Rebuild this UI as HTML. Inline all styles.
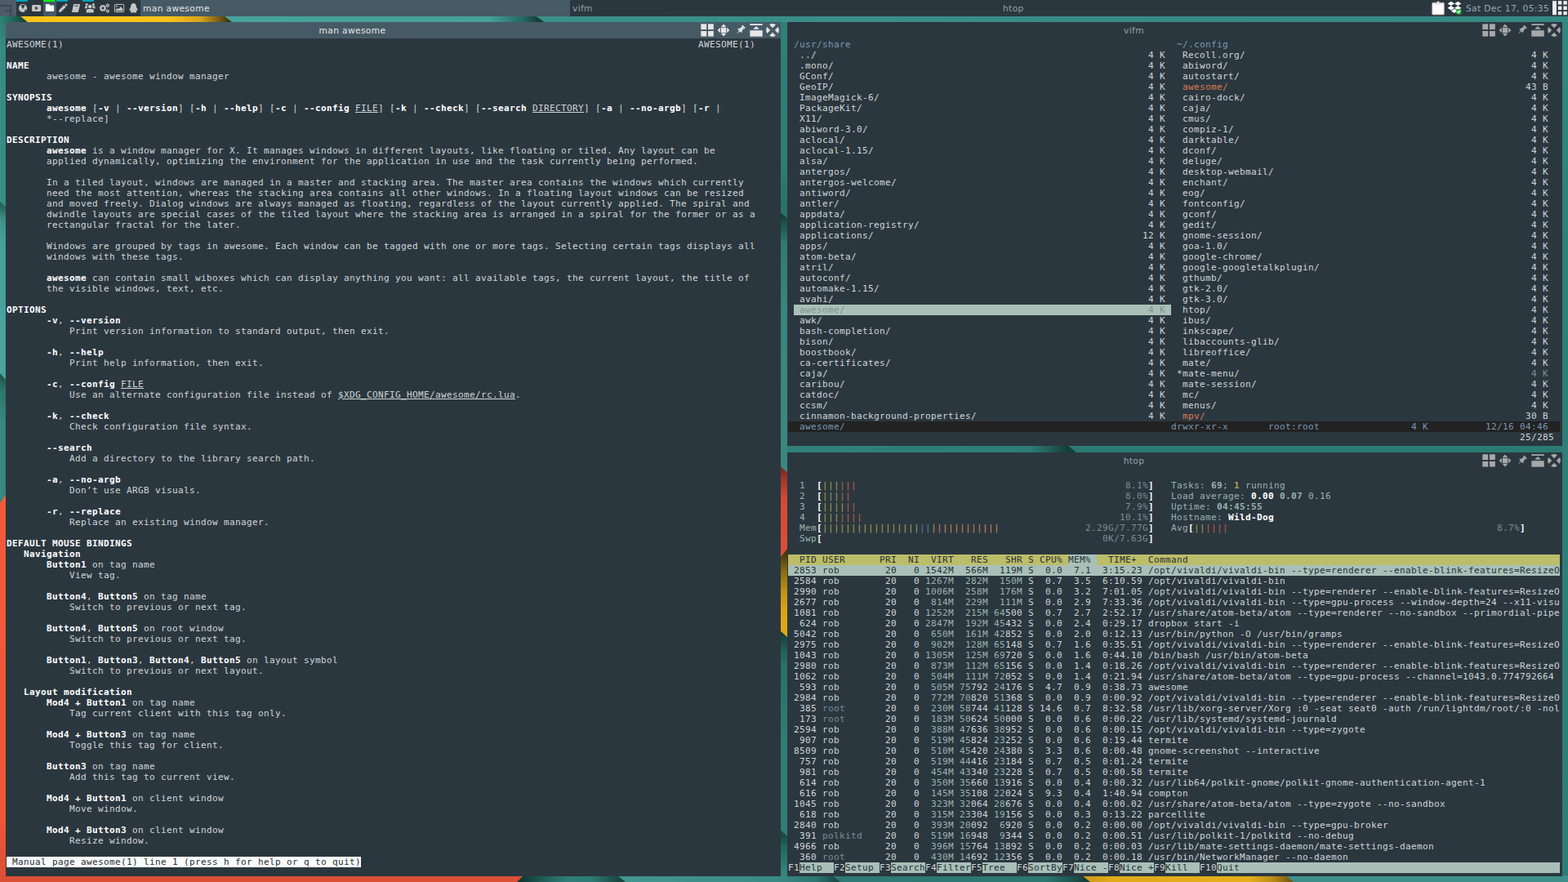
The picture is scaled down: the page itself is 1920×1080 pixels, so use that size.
<!DOCTYPE html>
<html lang="en"><head><meta charset="utf-8"><title>awesome desktop</title>
<style>
html,body{margin:0;padding:0}
body{width:1920px;height:1080px;overflow:hidden;position:relative;background:#38887f;font-family:"DejaVu Sans","Liberation Sans",sans-serif}
#wall{position:absolute;left:0;top:0}
#bar{position:absolute;left:0;top:0;width:1920px;height:20px;background:#2b373f;font-size:10.67px;letter-spacing:.36px;line-height:21px;color:#93a1a8;white-space:nowrap}
#bar div,#bar svg{position:absolute;top:0}
.win{position:absolute;background:#2b373f;overflow:hidden}
.tbar{position:absolute;left:0;top:0;right:0;height:20px;font-size:10.67px;letter-spacing:.36px;line-height:21px;white-space:nowrap}
.ttl{position:absolute;left:0;right:100px;top:0;text-align:center}
.tbi{position:absolute;top:0}
.term{position:absolute;left:1px;top:21px;right:0;bottom:0;font-family:"DejaVu Sans Mono","Liberation Mono",monospace;font-size:11px;letter-spacing:0.3774px;line-height:13px;white-space:pre;color:#d0d6d8}
.r{position:absolute;left:0;height:13px;width:945px}
.r span{position:absolute;top:0}
.r i{position:absolute;top:0;height:13px}
.b{font-weight:bold;color:#ffffff}
.u{text-decoration:underline;text-underline-offset:1px;text-decoration-thickness:1px}
.k{color:#263036}
.inv{background:#fafafa}
.bl{color:#7a99b5}
.or{color:#de7c54}
.sel{background:#a9c0b8}
.sf{color:#82918f}
.stat{background:#222222}
.hdr{background:#bcbd68}
.cy{color:#9bb3ae}
.cyb{color:#9bb3ae;font-weight:bold}
.g{color:#a8a548}
.gb{color:#a8a548;font-weight:bold}
.rd{color:#c5604c}
.y{color:#d88a55}
.bb{color:#5f7ea6}
.sh{color:#7d8b93}
</style></head><body>
<svg id="wall" width="1920" height="1080" viewBox="0 0 1920 1080"><defs><linearGradient id="w1" gradientUnits="userSpaceOnUse" y1="20" y2="1080" x1="0" x2="0"><stop offset="0.000" stop-color="#318880"/><stop offset="0.264" stop-color="#2e7f78"/><stop offset="1.000" stop-color="#2d7d76"/></linearGradient><linearGradient id="w2" gradientUnits="userSpaceOnUse" x1="650" x2="1920" y1="0" y2="0"><stop offset="0.000" stop-color="#3a9089"/><stop offset="0.512" stop-color="#388c85"/><stop offset="1.000" stop-color="#358881"/></linearGradient><linearGradient id="w3" gradientUnits="userSpaceOnUse" x1="283" x2="660" y1="0" y2="0"><stop offset="0.000" stop-color="#48a39d"/><stop offset="0.841" stop-color="#45a09a"/><stop offset="0.947" stop-color="#246862"/><stop offset="1.000" stop-color="#143c38"/></linearGradient><linearGradient id="w4" gradientUnits="userSpaceOnUse" x1="0" x2="30" y1="0" y2="0"><stop offset="0.000" stop-color="#2d867c"/><stop offset="0.467" stop-color="#226a5e"/><stop offset="1.000" stop-color="#15443a"/></linearGradient><linearGradient id="w5" gradientUnits="userSpaceOnUse" x1="26" x2="283" y1="0" y2="0"><stop offset="0.000" stop-color="#fcc419"/><stop offset="0.696" stop-color="#fbc31a"/><stop offset="0.852" stop-color="#d8a51b"/><stop offset="0.942" stop-color="#7a5f14"/><stop offset="1.000" stop-color="#2e2a12"/></linearGradient><linearGradient id="w6" gradientUnits="userSpaceOnUse" y1="27" y2="250" x1="0" x2="0"><stop offset="0.000" stop-color="#2a7b70"/><stop offset="0.148" stop-color="#33897f"/><stop offset="1.000" stop-color="#348c83"/></linearGradient><linearGradient id="w7" gradientUnits="userSpaceOnUse" y1="250" y2="460" x1="0" x2="0"><stop offset="0.000" stop-color="#1d5d56"/><stop offset="0.095" stop-color="#3a9089"/><stop offset="0.238" stop-color="#42a09a"/><stop offset="1.000" stop-color="#46a39c"/></linearGradient><linearGradient id="w8" gradientUnits="userSpaceOnUse" y1="460" y2="610" x1="0" x2="0"><stop offset="0.000" stop-color="#1b5048"/><stop offset="0.133" stop-color="#29756d"/><stop offset="0.400" stop-color="#35877f"/><stop offset="1.000" stop-color="#33867e"/></linearGradient><linearGradient id="w9" gradientUnits="userSpaceOnUse" y1="610" y2="1080" x1="0" x2="0"><stop offset="0.000" stop-color="#f05a3a"/><stop offset="0.830" stop-color="#ee5637"/><stop offset="1.000" stop-color="#dc5034"/></linearGradient><linearGradient id="w10" gradientUnits="userSpaceOnUse" x1="0" x2="8" y1="0" y2="0"><stop offset="0.000" stop-color="rgba(255,255,255,0.04)"/><stop offset="0.500" stop-color="rgba(255,255,255,0)"/><stop offset="1.000" stop-color="rgba(0,0,0,0.12)"/></linearGradient><linearGradient id="w11" gradientUnits="userSpaceOnUse" x1="636" x2="760" y1="0" y2="0"><stop offset="0.000" stop-color="#103430"/><stop offset="0.194" stop-color="#1d5752"/><stop offset="0.476" stop-color="#2f7f78"/><stop offset="0.718" stop-color="#2c7a73"/><stop offset="0.984" stop-color="#184641"/></linearGradient><linearGradient id="w12" gradientUnits="userSpaceOnUse" x1="760" x2="1025" y1="0" y2="0"><stop offset="0.000" stop-color="#41978f"/><stop offset="0.717" stop-color="#3a8a84"/><stop offset="0.906" stop-color="#2c756f"/><stop offset="1.000" stop-color="#184944"/></linearGradient><linearGradient id="w13" gradientUnits="userSpaceOnUse" x1="1025" x2="1330" y1="0" y2="0"><stop offset="0.000" stop-color="#2e7a74"/><stop offset="0.836" stop-color="#2c7770"/><stop offset="0.934" stop-color="#1e5752"/><stop offset="1.000" stop-color="#143e3a"/></linearGradient><linearGradient id="w14" gradientUnits="userSpaceOnUse" x1="1330" x2="1582" y1="0" y2="0"><stop offset="0.000" stop-color="#d09a1a"/><stop offset="0.119" stop-color="#e0aa1a"/><stop offset="0.794" stop-color="#e5ae1a"/><stop offset="0.913" stop-color="#b88a14"/><stop offset="1.000" stop-color="#6e5510"/></linearGradient><linearGradient id="w15" gradientUnits="userSpaceOnUse" y1="27" y2="262" x1="0" x2="0"><stop offset="0.000" stop-color="#2f8079"/><stop offset="0.736" stop-color="#2e7d76"/><stop offset="1.000" stop-color="#2a6f69"/></linearGradient><linearGradient id="w16" gradientUnits="userSpaceOnUse" y1="262" y2="580" x1="0" x2="0"><stop offset="0.000" stop-color="#133a35"/><stop offset="0.041" stop-color="#1d544e"/><stop offset="0.113" stop-color="#2f7a73"/><stop offset="0.371" stop-color="#3a8580"/><stop offset="1.000" stop-color="#3c8782"/></linearGradient><linearGradient id="w17" gradientUnits="userSpaceOnUse" y1="573" y2="680" x1="0" x2="0"><stop offset="0.000" stop-color="#74281e"/><stop offset="0.159" stop-color="#a83a2a"/><stop offset="0.364" stop-color="#d44a35"/><stop offset="1.000" stop-color="#dc4f38"/></linearGradient><linearGradient id="w18" gradientUnits="userSpaceOnUse" y1="676" y2="776" x1="0" x2="0"><stop offset="0.000" stop-color="#40330f"/><stop offset="0.240" stop-color="#8a6c10"/><stop offset="0.490" stop-color="#c09312"/><stop offset="0.740" stop-color="#d9a514"/><stop offset="1.000" stop-color="#dca815"/></linearGradient><linearGradient id="w19" gradientUnits="userSpaceOnUse" y1="776" y2="1020" x1="0" x2="0"><stop offset="0.000" stop-color="#153d38"/><stop offset="0.078" stop-color="#215e59"/><stop offset="0.160" stop-color="#2a6f6a"/><stop offset="0.508" stop-color="#2e7d76"/><stop offset="1.000" stop-color="#2e7d76"/></linearGradient><linearGradient id="w20" gradientUnits="userSpaceOnUse" y1="1020" y2="1072" x1="0" x2="0"><stop offset="0.000" stop-color="#164440"/><stop offset="0.385" stop-color="#256a64"/><stop offset="0.808" stop-color="#2f7f78"/><stop offset="1.000" stop-color="#368680"/></linearGradient><linearGradient id="w21" gradientUnits="userSpaceOnUse" x1="964" x2="1308" y1="0" y2="0"><stop offset="0.000" stop-color="#327f79"/><stop offset="0.860" stop-color="#2e7d77"/><stop offset="0.933" stop-color="#235f5a"/><stop offset="1.000" stop-color="#153c38"/></linearGradient></defs><rect x="0" y="0" width="1920" height="1080" fill="#2d7d76"/><rect x="1912" y="20" width="8" height="1060" fill="url(#w1)"/><rect x="650" y="19" width="1270" height="9" fill="url(#w2)"/><rect x="268" y="19" width="405" height="9" fill="url(#w3)"/><polygon points="655,19 680,19 680,28 668,28" fill="#3a9089"/><rect x="0" y="19" width="40" height="9" fill="url(#w4)"/><polygon points="24,19 274,19 285,28 35,28" fill="url(#w5)"/><rect x="0" y="27" width="8" height="230" fill="url(#w6)"/><polygon points="0,247 8,254 8,470 0,470" fill="url(#w7)"/><polygon points="0,457 8,466 8,620 0,620" fill="url(#w8)"/><polygon points="0,616 8,604 8,1080 0,1080" fill="url(#w9)"/><rect x="0" y="27" width="8" height="585" fill="url(#w10)"/><rect x="0" y="1072" width="640" height="8" fill="#db5034"/><polygon points="641,1072 760,1072 768,1080 633,1080" fill="url(#w11)"/><polygon points="756,1072 1021,1072 1031,1080 766,1080" fill="url(#w12)"/><polygon points="1019,1072 1327,1072 1337,1080 1029,1080" fill="url(#w13)"/><polygon points="1325,1072 1576,1072 1586,1080 1335,1080" fill="url(#w14)"/><polygon points="1574,1072 1920,1072 1920,1080 1584,1080" fill="#3f8f89"/><rect x="955" y="27" width="10" height="245" fill="url(#w15)"/><polygon points="955,260 965,268 965,580 955,580" fill="url(#w16)"/><polygon points="955,571 965,579 965,685 955,685" fill="url(#w17)"/><polygon points="955,683 965,671 965,785 955,785" fill="url(#w18)"/><polygon points="955,772 965,781 965,1030 955,1030" fill="url(#w19)"/><polygon points="955,1016 965,1025 965,1073 955,1073" fill="url(#w20)"/><rect x="964" y="545" width="358" height="10" fill="url(#w21)"/><polygon points="1307,545 1913,545 1913,555 1319,555" fill="#2c7a73"/></svg>
<div id="bar"><svg style="left:0" width="20" height="20" viewBox="0 0 20 20"><rect width="20" height="20" fill="#4f5b67"/><path d="M0 7h13.300v13M6 13.200h7.300" fill="none" stroke="#3c4752" stroke-width="2"/></svg><div style="left:53px;width:16px;height:20px;background:#465a65"></div><div style="left:20px;width:14px;height:2px;background:#00a3b4"></div><div style="left:53px;width:14px;height:2px;background:#00ff00"></div><div style="left:69px;width:14px;height:2px;background:#00a3b4"></div><div style="left:101px;width:14px;height:2px;background:#00a3b4"></div><svg style="left:20px" width="16" height="20" viewBox="0 0 16 20"><circle cx="8" cy="10" r="5.1" fill="#c4c4c4"/><path d="M6 6.2l3.4-.4 1.2 1.5-1.6 1.8-.4 1.6-1.3-.6-.9-1.9zM10.6 11.6l1.6.3-.6 1.8-1.3.4z" fill="#2b373f"/></svg><svg style="left:37px" width="16" height="20" viewBox="0 0 16 20"><rect x="2" y="5.9" width="11.2" height="8.1" rx="1.6" fill="#c4c4c4"/><path d="M6.2 7.8v4.4l3.6-2.2z" fill="#2b373f"/></svg><svg style="left:53px" width="16" height="20" viewBox="0 0 16 20"><path d="M2.8 5.8q0-.9.9-.9h3.2q.9 0 .9.9v.8h4.5q.9 0 .9.9V13q0 .9-.9.9H3.700q-.9 0-.9-.9z" fill="#ffffff"/></svg><svg style="left:69px" width="16" height="20" viewBox="0 0 16 20"><path d="M2.800 15.100l.7-3 6-6 2.300 2.300-6 6zM10.200 5.400l.9-.9q.5-.5 1 0l1.300 1.300q.5.5 0 1l-.9.900z" fill="#c4c4c4"/></svg><svg style="left:85px" width="16" height="20" viewBox="0 0 16 20"><path d="M5.200 5h7.300q.7 0 .5.700L10.900 14.600q-.2.500-.9.500H3.900q-1 0-.8-1zM6.600 6.800h4.200l-.3 1H6.300z" fill="#c4c4c4" fill-rule="evenodd"/></svg><svg style="left:101px" width="18" height="20" viewBox="0 0 18 20" fill="#c4c4c4"><circle cx="9.200" cy="8" r="2.300"/><path d="M5.400 15.500q-.8 0-.8-.8v-1.600q0-2.200 2.300-2.200h4.600q2.300 0 2.300 2.200v1.600q0 .8-.8.800z"/><circle cx="5.100" cy="5.600" r="1.500"/><circle cx="13.300" cy="5.600" r="1.500"/><path d="M3 7.500h3.300l-.2 1.800-1.800 1.200H3zM15.400 7.500h-3.300l.2 1.800 1.800 1.200h1.300z"/></svg><svg style="left:119px" width="18" height="20" viewBox="0 0 18 20"><circle cx="7" cy="9.900" r="2.500" fill="none" stroke="#c4c4c4" stroke-width="1.900"/><circle cx="7" cy="9.900" r="3.700" fill="none" stroke="#c4c4c4" stroke-width="1.100" stroke-dasharray="1.450 1.456"/><circle cx="12.800" cy="6.700" r="1.300" fill="none" stroke="#c4c4c4" stroke-width="1.100"/><circle cx="12.800" cy="13.500" r="1.300" fill="none" stroke="#c4c4c4" stroke-width="1.100"/><circle cx="12.800" cy="6.700" r="2" fill="none" stroke="#c4c4c4" stroke-width=".8" stroke-dasharray=".9 1.194"/><circle cx="12.800" cy="13.500" r="2" fill="none" stroke="#c4c4c4" stroke-width=".8" stroke-dasharray=".9 1.194"/></svg><svg style="left:137px" width="18" height="20" viewBox="0 0 18 20"><rect x="3.300" y="5.400" width="11.400" height="9.200" rx=".8" fill="none" stroke="#c4c4c4" stroke-width="1"/><circle cx="6" cy="7.800" r="1" fill="#c4c4c4"/><path d="M4.700 13.300v-1.500l2-1.800 1.300 1.200 2.800-3.300 2.600 3.200v2.200z" fill="#c4c4c4"/></svg><svg style="left:155px" width="17" height="20" viewBox="0 0 17 20"><path d="M8.500 4q3.100 0 3.300 3.600.100 1.300 1.200 2.900.9 1.500.4 2.400-.4.300-.9-.5-.3 1-1 1.500.9.400.8 1-.2.700-2 .7-1.300 0-1.800-.5-.5.500-1.800.5-1.800 0-2-.7-.1-.6.800-1-.7-.5-1-1.500-.5.800-.9.500-.5-.9.400-2.400 1.100-1.600 1.200-2.900Q5.400 4 8.500 4z" fill="#c4c4c4"/></svg><div style="left:172px;width:526px;height:20px;background:#465a65"></div><div style="left:175px;color:#e4e7e8">man awesome</div><div style="left:701px">vifm</div><div style="left:1228px">htop</div><svg style="left:1752px" width="18" height="20" viewBox="0 0 18 20"><rect x="1.700" y="3.300" width="14.600" height="14.700" rx="1" fill="#fff" stroke="#b79d92" stroke-width=".9"/><path d="M5.200 4.800q0-1.600 1.600-1.600h.7q.2-1.800 1.500-1.800t1.500 1.800h.7q1.600 0 1.600 1.600z" fill="#e8e8e8" stroke="#aaa" stroke-width=".4"/></svg><svg style="left:1771px" width="20" height="20" viewBox="0 0 20 20"><path d="M5.800 1.700 10 4.400 5.800 7.100 1.600 4.400zM14.200 1.700l4.200 2.700-4.200 2.700L10 4.400zM1.600 9.800l4.200-2.700L10 9.800l-4.200 2.700zM14.200 7.100l4.200 2.700-4.200 2.700L10 9.800zM5.800 13.400l4.200-2.700 4.200 2.700-4.200 2.700z" fill="#fff"/><circle cx="15.100" cy="14.200" r="3.500" fill="#2fb344"/><path d="M13.300 14.200l1.300 1.300 2.400-2.500" fill="none" stroke="#fff" stroke-width="1.100"/></svg><div style="left:1795px;color:#93a8bc">Sat Dec 17, 05:35</div><svg style="left:1900px" width="20" height="20" viewBox="0 0 20 20" fill="#ececec"><rect x="1" y="1.100" width="4.900" height="17.200"/><rect x="7.800" y="1.100" width="4.500" height="4.500"/><rect x="14.300" y="1.100" width="4.500" height="4.500"/><rect x="7.800" y="7.500" width="4.500" height="4.700"/><rect x="14.300" y="7.500" width="4.500" height="4.700"/><rect x="7.800" y="14" width="4.500" height="4.300"/><rect x="14.300" y="14" width="4.500" height="4.300"/></svg></div>
<div class="win" style="left:7px;top:27px;width:949px;height:1046px">
<div class="tbar" style="background:#465a65;color:#e4e7e8"><div class="ttl">man awesome</div><svg class="tbi" style="right:80px" width="20" height="20" viewBox="0 0 20 20" fill="#e6e6e6"><rect x="2.3" y="2.3" width="6.9" height="6.8"/><rect x="11" y="2.3" width="6.8" height="6.8"/><rect x="2.3" y="11" width="6.9" height="6.6"/><rect x="11" y="11" width="6.8" height="6.6"/></svg><svg class="tbi" style="right:60px" width="20" height="20" viewBox="0 0 20 20" fill="#e6e6e6"><rect x="6.9" y="6.8" width="6.3" height="6.5"/><path d="M10 2.6 13.2 5.9H6.8zM10 17.4 6.8 14.1h6.4zM2.6 10 5.9 6.8v6.4zM17.4 10 14.1 13.2V6.8z"/></svg><svg class="tbi" style="right:40px" width="20" height="20" viewBox="0 0 20 20" fill="#e6e6e6"><g transform="translate(10.700 9.700) rotate(45)"><rect x="-2.500" y="-6.200" width="5" height="1.900" rx=".6"/><path d="M-1.500-4.500h3l.5 4.200h-4z"/><path d="M-3.200 1.700Q-3.200-.9 0-.9 3.200-.9 3.200 1.700z"/><path d="M-.7 1.600h1.400L0 6.700z"/></g></svg><svg class="tbi" style="right:20px" width="20" height="20" viewBox="0 0 20 20" fill="#e6e6e6"><rect x="2.3" y="2.2" width="15.4" height="1.800"/><path d="M10 5 13.800 8.800H6.200z"/><rect x="2.3" y="10.200" width="15.400" height="7.500"/></svg><svg class="tbi" style="right:0px" width="20" height="20" viewBox="0 0 20 20" fill="#e6e6e6"><path d="M10 7.200 6.100 3.250A7.800 7.800 0 0 1 13.900 3.250zM10 12.800 13.900 16.750A7.800 7.800 0 0 1 6.100 16.750zM7.200 10 3.250 13.900A7.800 7.800 0 0 1 3.250 6.100zM12.800 10 16.750 6.100A7.800 7.800 0 0 1 16.750 13.900z"/></svg></div>
<div class="term"><div class="r" style="top:0px"><span style="left:0px">AWESOME(1)</span><span style="left:847px">AWESOME(1)</span></div><div class="r" style="top:26px"><span class="b" style="left:0px">NAME</span></div><div class="r" style="top:39px"><span style="left:49px">awesome - awesome window manager</span></div><div class="r" style="top:65px"><span class="b" style="left:0px">SYNOPSIS</span></div><div class="r" style="top:78px"><span class="b" style="left:49px">awesome</span><span style="left:105px">[</span><span class="b" style="left:112px">-v</span><span style="left:133px">| </span><span class="b" style="left:147px">--version</span><span style="left:210px">] [</span><span class="b" style="left:231px">-h</span><span style="left:252px">| </span><span class="b" style="left:266px">--help</span><span style="left:308px">] [</span><span class="b" style="left:329px">-c</span><span style="left:350px">| </span><span class="b" style="left:364px">--config</span><span class="u" style="left:427px">FILE</span><span style="left:455px">] [</span><span class="b" style="left:476px">-k</span><span style="left:497px">| </span><span class="b" style="left:511px">--check</span><span style="left:560px">] [</span><span class="b" style="left:581px">--search</span><span class="u" style="left:644px">DIRECTORY</span><span style="left:707px">] [</span><span class="b" style="left:728px">-a</span><span style="left:749px">| </span><span class="b" style="left:763px">--no-argb</span><span style="left:826px">] [</span><span class="b" style="left:847px">-r</span><span style="left:868px">|</span></div><div class="r" style="top:91px"><span style="left:49px">*--replace]</span></div><div class="r" style="top:117px"><span class="b" style="left:0px">DESCRIPTION</span></div><div class="r" style="top:130px"><span class="b" style="left:49px">awesome</span><span style="left:105px">is a window manager for X. It manages windows in different layouts, like floating or tiled. Any layout can be</span></div><div class="r" style="top:143px"><span style="left:49px">applied dynamically, optimizing the environment for the application in use and the task currently being performed.</span></div><div class="r" style="top:169px"><span style="left:49px">In a tiled layout, windows are managed in a master and stacking area. The master area contains the windows which currently</span></div><div class="r" style="top:182px"><span style="left:49px">need the most attention, whereas the stacking area contains all other windows. In a floating layout windows can be resized</span></div><div class="r" style="top:195px"><span style="left:49px">and moved freely. Dialog windows are always managed as floating, regardless of the layout currently applied. The spiral and</span></div><div class="r" style="top:208px"><span style="left:49px">dwindle layouts are special cases of the tiled layout where the stacking area is arranged in a spiral for the former or as a</span></div><div class="r" style="top:221px"><span style="left:49px">rectangular fractal for the later.</span></div><div class="r" style="top:247px"><span style="left:49px">Windows are grouped by tags in awesome. Each window can be tagged with one or more tags. Selecting certain tags displays all</span></div><div class="r" style="top:260px"><span style="left:49px">windows with these tags.</span></div><div class="r" style="top:286px"><span class="b" style="left:49px">awesome</span><span style="left:105px">can contain small wiboxes which can display anything you want: all available tags, the current layout, the title of</span></div><div class="r" style="top:299px"><span style="left:49px">the visible windows, text, etc.</span></div><div class="r" style="top:325px"><span class="b" style="left:0px">OPTIONS</span></div><div class="r" style="top:338px"><span class="b" style="left:49px">-v</span><span style="left:63px">, </span><span class="b" style="left:77px">--version</span></div><div class="r" style="top:351px"><span style="left:77px">Print version information to standard output, then exit.</span></div><div class="r" style="top:377px"><span class="b" style="left:49px">-h</span><span style="left:63px">, </span><span class="b" style="left:77px">--help</span></div><div class="r" style="top:390px"><span style="left:77px">Print help information, then exit.</span></div><div class="r" style="top:416px"><span class="b" style="left:49px">-c</span><span style="left:63px">, </span><span class="b" style="left:77px">--config</span><span class="u" style="left:140px">FILE</span></div><div class="r" style="top:429px"><span style="left:77px">Use an alternate configuration file instead of </span><span class="u" style="left:406px">$XDG_CONFIG_HOME/awesome/rc.lua</span><span style="left:623px">.</span></div><div class="r" style="top:455px"><span class="b" style="left:49px">-k</span><span style="left:63px">, </span><span class="b" style="left:77px">--check</span></div><div class="r" style="top:468px"><span style="left:77px">Check configuration file syntax.</span></div><div class="r" style="top:494px"><span class="b" style="left:49px">--search</span></div><div class="r" style="top:507px"><span style="left:77px">Add a directory to the library search path.</span></div><div class="r" style="top:533px"><span class="b" style="left:49px">-a</span><span style="left:63px">, </span><span class="b" style="left:77px">--no-argb</span></div><div class="r" style="top:546px"><span style="left:77px">Don’t use ARGB visuals.</span></div><div class="r" style="top:572px"><span class="b" style="left:49px">-r</span><span style="left:63px">, </span><span class="b" style="left:77px">--replace</span></div><div class="r" style="top:585px"><span style="left:77px">Replace an existing window manager.</span></div><div class="r" style="top:611px"><span class="b" style="left:0px">DEFAULT MOUSE BINDINGS</span></div><div class="r" style="top:624px"><span class="b" style="left:21px">Navigation</span></div><div class="r" style="top:637px"><span class="b" style="left:49px">Button1</span><span style="left:105px">on tag name</span></div><div class="r" style="top:650px"><span style="left:77px">View tag.</span></div><div class="r" style="top:676px"><span class="b" style="left:49px">Button4</span><span style="left:98px">, </span><span class="b" style="left:112px">Button5</span><span style="left:168px">on tag name</span></div><div class="r" style="top:689px"><span style="left:77px">Switch to previous or next tag.</span></div><div class="r" style="top:715px"><span class="b" style="left:49px">Button4</span><span style="left:98px">, </span><span class="b" style="left:112px">Button5</span><span style="left:168px">on root window</span></div><div class="r" style="top:728px"><span style="left:77px">Switch to previous or next tag.</span></div><div class="r" style="top:754px"><span class="b" style="left:49px">Button1</span><span style="left:98px">, </span><span class="b" style="left:112px">Button3</span><span style="left:161px">, </span><span class="b" style="left:175px">Button4</span><span style="left:224px">, </span><span class="b" style="left:238px">Button5</span><span style="left:294px">on layout symbol</span></div><div class="r" style="top:767px"><span style="left:77px">Switch to previous or next layout.</span></div><div class="r" style="top:793px"><span class="b" style="left:21px">Layout modification</span></div><div class="r" style="top:806px"><span class="b" style="left:49px">Mod4 + Button1</span><span style="left:154px">on tag name</span></div><div class="r" style="top:819px"><span style="left:77px">Tag current client with this tag only.</span></div><div class="r" style="top:845px"><span class="b" style="left:49px">Mod4 + Button3</span><span style="left:154px">on tag name</span></div><div class="r" style="top:858px"><span style="left:77px">Toggle this tag for client.</span></div><div class="r" style="top:884px"><span class="b" style="left:49px">Button3</span><span style="left:105px">on tag name</span></div><div class="r" style="top:897px"><span style="left:77px">Add this tag to current view.</span></div><div class="r" style="top:923px"><span class="b" style="left:49px">Mod4 + Button1</span><span style="left:154px">on client window</span></div><div class="r" style="top:936px"><span style="left:77px">Move window.</span></div><div class="r" style="top:962px"><span class="b" style="left:49px">Mod4 + Button3</span><span style="left:154px">on client window</span></div><div class="r" style="top:975px"><span style="left:77px">Resize window.</span></div><div class="r" style="top:1001px"><i class="inv" style="left:0px;width:434px"></i><span class="k" style="left:0px"> Manual page awesome(1) line 1 (press h for help or q to quit)</span></div></div>
</div>
<div class="win" style="left:964px;top:27px;width:949px;height:519px">
<div class="tbar" style="background:#2b373f;color:#93a1a8"><div class="ttl">vifm</div><svg class="tbi" style="right:80px" width="20" height="20" viewBox="0 0 20 20" fill="#a8a8a8"><rect x="2.3" y="2.3" width="6.9" height="6.8"/><rect x="11" y="2.3" width="6.8" height="6.8"/><rect x="2.3" y="11" width="6.9" height="6.6"/><rect x="11" y="11" width="6.8" height="6.6"/></svg><svg class="tbi" style="right:60px" width="20" height="20" viewBox="0 0 20 20" fill="#a8a8a8"><rect x="6.9" y="6.8" width="6.3" height="6.5"/><path d="M10 2.6 13.2 5.9H6.8zM10 17.4 6.8 14.1h6.4zM2.6 10 5.9 6.8v6.4zM17.4 10 14.1 13.2V6.8z"/></svg><svg class="tbi" style="right:40px" width="20" height="20" viewBox="0 0 20 20" fill="#a8a8a8"><g transform="translate(10.700 9.700) rotate(45)"><rect x="-2.500" y="-6.200" width="5" height="1.900" rx=".6"/><path d="M-1.500-4.500h3l.5 4.200h-4z"/><path d="M-3.200 1.700Q-3.200-.9 0-.9 3.200-.9 3.200 1.700z"/><path d="M-.7 1.600h1.400L0 6.700z"/></g></svg><svg class="tbi" style="right:20px" width="20" height="20" viewBox="0 0 20 20" fill="#a8a8a8"><rect x="2.3" y="2.2" width="15.4" height="1.800"/><path d="M10 5 13.800 8.800H6.200z"/><rect x="2.3" y="10.200" width="15.400" height="7.500"/></svg><svg class="tbi" style="right:0px" width="20" height="20" viewBox="0 0 20 20" fill="#a8a8a8"><path d="M10 7.200 6.100 3.250A7.800 7.800 0 0 1 13.900 3.250zM10 12.800 13.900 16.750A7.800 7.800 0 0 1 6.100 16.750zM7.200 10 3.250 13.900A7.800 7.800 0 0 1 3.250 6.100zM12.800 10 16.750 6.100A7.800 7.800 0 0 1 16.750 13.900z"/></svg></div>
<div class="term"><div class="r" style="top:0px"><span class="bl" style="left:7px">/usr/share</span><span class="bl" style="left:476px">~/.config</span></div><div class="r" style="top:13px"><span style="left:14px">../</span><span style="left:441px">4 K</span></div><div class="r" style="top:26px"><span style="left:14px">.mono/</span><span style="left:441px">4 K</span></div><div class="r" style="top:39px"><span style="left:14px">GConf/</span><span style="left:441px">4 K</span></div><div class="r" style="top:52px"><span style="left:14px">GeoIP/</span><span style="left:441px">4 K</span></div><div class="r" style="top:65px"><span style="left:14px">ImageMagick-6/</span><span style="left:441px">4 K</span></div><div class="r" style="top:78px"><span style="left:14px">PackageKit/</span><span style="left:441px">4 K</span></div><div class="r" style="top:91px"><span style="left:14px">X11/</span><span style="left:441px">4 K</span></div><div class="r" style="top:104px"><span style="left:14px">abiword-3.0/</span><span style="left:441px">4 K</span></div><div class="r" style="top:117px"><span style="left:14px">aclocal/</span><span style="left:441px">4 K</span></div><div class="r" style="top:130px"><span style="left:14px">aclocal-1.15/</span><span style="left:441px">4 K</span></div><div class="r" style="top:143px"><span style="left:14px">alsa/</span><span style="left:441px">4 K</span></div><div class="r" style="top:156px"><span style="left:14px">antergos/</span><span style="left:441px">4 K</span></div><div class="r" style="top:169px"><span style="left:14px">antergos-welcome/</span><span style="left:441px">4 K</span></div><div class="r" style="top:182px"><span style="left:14px">antiword/</span><span style="left:441px">4 K</span></div><div class="r" style="top:195px"><span style="left:14px">antler/</span><span style="left:441px">4 K</span></div><div class="r" style="top:208px"><span style="left:14px">appdata/</span><span style="left:441px">4 K</span></div><div class="r" style="top:221px"><span style="left:14px">application-registry/</span><span style="left:441px">4 K</span></div><div class="r" style="top:234px"><span style="left:14px">applications/</span><span style="left:434px">12 K</span></div><div class="r" style="top:247px"><span style="left:14px">apps/</span><span style="left:441px">4 K</span></div><div class="r" style="top:260px"><span style="left:14px">atom-beta/</span><span style="left:441px">4 K</span></div><div class="r" style="top:273px"><span style="left:14px">atril/</span><span style="left:441px">4 K</span></div><div class="r" style="top:286px"><span style="left:14px">autoconf/</span><span style="left:441px">4 K</span></div><div class="r" style="top:299px"><span style="left:14px">automake-1.15/</span><span style="left:441px">4 K</span></div><div class="r" style="top:312px"><span style="left:14px">avahi/</span><span style="left:441px">4 K</span></div><div class="r" style="top:325px"><i class="sel" style="left:7px;width:462px"></i><span class="sf" style="left:14px">awesome/</span><span class="sf" style="left:441px">4 K</span></div><div class="r" style="top:338px"><span style="left:14px">awk/</span><span style="left:441px">4 K</span></div><div class="r" style="top:351px"><span style="left:14px">bash-completion/</span><span style="left:441px">4 K</span></div><div class="r" style="top:364px"><span style="left:14px">bison/</span><span style="left:441px">4 K</span></div><div class="r" style="top:377px"><span style="left:14px">boostbook/</span><span style="left:441px">4 K</span></div><div class="r" style="top:390px"><span style="left:14px">ca-certificates/</span><span style="left:441px">4 K</span></div><div class="r" style="top:403px"><span style="left:14px">caja/</span><span style="left:441px">4 K</span></div><div class="r" style="top:416px"><span style="left:14px">caribou/</span><span style="left:441px">4 K</span></div><div class="r" style="top:429px"><span style="left:14px">catdoc/</span><span style="left:441px">4 K</span></div><div class="r" style="top:442px"><span style="left:14px">ccsm/</span><span style="left:441px">4 K</span></div><div class="r" style="top:455px"><span style="left:14px">cinnamon-background-properties/</span><span style="left:441px">4 K</span></div><div class="r" style="top:13px"><span style="left:483px">Recoll.org/</span><span style="left:910px">4 K</span></div><div class="r" style="top:26px"><span style="left:483px">abiword/</span><span style="left:910px">4 K</span></div><div class="r" style="top:39px"><span style="left:483px">autostart/</span><span style="left:910px">4 K</span></div><div class="r" style="top:52px"><span class="or" style="left:483px">awesome/</span><span style="left:903px">43 B</span></div><div class="r" style="top:65px"><span style="left:483px">cairo-dock/</span><span style="left:910px">4 K</span></div><div class="r" style="top:78px"><span style="left:483px">caja/</span><span style="left:910px">4 K</span></div><div class="r" style="top:91px"><span style="left:483px">cmus/</span><span style="left:910px">4 K</span></div><div class="r" style="top:104px"><span style="left:483px">compiz-1/</span><span style="left:910px">4 K</span></div><div class="r" style="top:117px"><span style="left:483px">darktable/</span><span style="left:910px">4 K</span></div><div class="r" style="top:130px"><span style="left:483px">dconf/</span><span style="left:910px">4 K</span></div><div class="r" style="top:143px"><span style="left:483px">deluge/</span><span style="left:910px">4 K</span></div><div class="r" style="top:156px"><span style="left:483px">desktop-webmail/</span><span style="left:910px">4 K</span></div><div class="r" style="top:169px"><span style="left:483px">enchant/</span><span style="left:910px">4 K</span></div><div class="r" style="top:182px"><span style="left:483px">eog/</span><span style="left:910px">4 K</span></div><div class="r" style="top:195px"><span style="left:483px">fontconfig/</span><span style="left:910px">4 K</span></div><div class="r" style="top:208px"><span style="left:483px">gconf/</span><span style="left:910px">4 K</span></div><div class="r" style="top:221px"><span style="left:483px">gedit/</span><span style="left:910px">4 K</span></div><div class="r" style="top:234px"><span style="left:483px">gnome-session/</span><span style="left:910px">4 K</span></div><div class="r" style="top:247px"><span style="left:483px">goa-1.0/</span><span style="left:910px">4 K</span></div><div class="r" style="top:260px"><span style="left:483px">google-chrome/</span><span style="left:910px">4 K</span></div><div class="r" style="top:273px"><span style="left:483px">google-googletalkplugin/</span><span style="left:910px">4 K</span></div><div class="r" style="top:286px"><span style="left:483px">gthumb/</span><span style="left:910px">4 K</span></div><div class="r" style="top:299px"><span style="left:483px">gtk-2.0/</span><span style="left:910px">4 K</span></div><div class="r" style="top:312px"><span style="left:483px">gtk-3.0/</span><span style="left:910px">4 K</span></div><div class="r" style="top:325px"><span style="left:483px">htop/</span><span style="left:910px">4 K</span></div><div class="r" style="top:338px"><span style="left:483px">ibus/</span><span style="left:910px">4 K</span></div><div class="r" style="top:351px"><span style="left:483px">inkscape/</span><span style="left:910px">4 K</span></div><div class="r" style="top:364px"><span style="left:483px">libaccounts-glib/</span><span style="left:910px">4 K</span></div><div class="r" style="top:377px"><span style="left:483px">libreoffice/</span><span style="left:910px">4 K</span></div><div class="r" style="top:390px"><span style="left:483px">mate/</span><span style="left:910px">4 K</span></div><div class="r" style="top:403px"><span style="left:476px">*</span><span style="left:483px">mate-menu/</span><span class="sf" style="left:910px">4 K</span></div><div class="r" style="top:416px"><span style="left:483px">mate-session/</span><span style="left:910px">4 K</span></div><div class="r" style="top:429px"><span style="left:483px">mc/</span><span style="left:910px">4 K</span></div><div class="r" style="top:442px"><span style="left:483px">menus/</span><span style="left:910px">4 K</span></div><div class="r" style="top:455px"><span class="or" style="left:483px">mpv/</span><span style="left:903px">30 B</span></div><div class="r" style="top:468px"><i class="stat" style="left:0px;width:945px"></i><span class="bl" style="left:14px">awesome/</span><span class="bl" style="left:469px">drwxr-xr-x</span><span class="bl" style="left:588px">root:root</span><span class="bl" style="left:763px">4 K</span><span class="bl" style="left:854px">12/16 04:46</span></div><div class="r" style="top:481px"><span style="left:896px">25/285</span></div></div>
</div>
<div class="win" style="left:964px;top:554px;width:949px;height:519px">
<div class="tbar" style="background:#2b373f;color:#93a1a8"><div class="ttl">htop</div><svg class="tbi" style="right:80px" width="20" height="20" viewBox="0 0 20 20" fill="#a8a8a8"><rect x="2.3" y="2.3" width="6.9" height="6.8"/><rect x="11" y="2.3" width="6.8" height="6.8"/><rect x="2.3" y="11" width="6.9" height="6.6"/><rect x="11" y="11" width="6.8" height="6.6"/></svg><svg class="tbi" style="right:60px" width="20" height="20" viewBox="0 0 20 20" fill="#a8a8a8"><rect x="6.9" y="6.8" width="6.3" height="6.5"/><path d="M10 2.6 13.2 5.9H6.8zM10 17.4 6.8 14.1h6.4zM2.6 10 5.9 6.8v6.4zM17.4 10 14.1 13.2V6.8z"/></svg><svg class="tbi" style="right:40px" width="20" height="20" viewBox="0 0 20 20" fill="#a8a8a8"><g transform="translate(10.700 9.700) rotate(45)"><rect x="-2.500" y="-6.200" width="5" height="1.900" rx=".6"/><path d="M-1.500-4.500h3l.5 4.200h-4z"/><path d="M-3.200 1.700Q-3.200-.9 0-.9 3.200-.9 3.200 1.700z"/><path d="M-.7 1.600h1.400L0 6.700z"/></g></svg><svg class="tbi" style="right:20px" width="20" height="20" viewBox="0 0 20 20" fill="#a8a8a8"><rect x="2.3" y="2.2" width="15.4" height="1.800"/><path d="M10 5 13.800 8.800H6.200z"/><rect x="2.3" y="10.200" width="15.400" height="7.500"/></svg><svg class="tbi" style="right:0px" width="20" height="20" viewBox="0 0 20 20" fill="#a8a8a8"><path d="M10 7.200 6.100 3.250A7.800 7.800 0 0 1 13.900 3.250zM10 12.800 13.900 16.750A7.800 7.800 0 0 1 6.100 16.750zM7.200 10 3.250 13.900A7.800 7.800 0 0 1 3.250 6.100zM12.800 10 16.750 6.100A7.800 7.800 0 0 1 16.750 13.900z"/></svg></div>
<div class="term"><div class="r" style="top:13px"><span class="cy" style="left:14px">1</span><span class="b" style="left:35px">[</span><span class="g" style="left:42px">|||</span><span class="rd" style="left:63px">|||</span><span class="sh" style="left:413px">8.1%</span><span class="b" style="left:441px">]</span><span class="cy" style="left:469px">Tasks: </span><span class="cyb" style="left:518px">69</span><span class="cy" style="left:532px">; </span><span class="gb" style="left:546px">1</span><span class="cy" style="left:553px"> running</span></div><div class="r" style="top:26px"><span class="cy" style="left:14px">2</span><span class="b" style="left:35px">[</span><span class="g" style="left:42px">|||</span><span class="rd" style="left:63px">||</span><span class="sh" style="left:413px">8.0%</span><span class="b" style="left:441px">]</span><span class="cy" style="left:469px">Load average: </span><span class="b" style="left:567px">0.00 </span><span class="cyb" style="left:602px">0.07 </span><span class="cy" style="left:637px">0.16</span></div><div class="r" style="top:39px"><span class="cy" style="left:14px">3</span><span class="b" style="left:35px">[</span><span class="g" style="left:42px">||||</span><span class="rd" style="left:70px">||</span><span class="sh" style="left:413px">7.9%</span><span class="b" style="left:441px">]</span><span class="cy" style="left:469px">Uptime: </span><span class="cyb" style="left:525px">04:45:55</span></div><div class="r" style="top:52px"><span class="cy" style="left:14px">4</span><span class="b" style="left:35px">[</span><span class="g" style="left:42px">|||</span><span class="rd" style="left:63px">||||</span><span class="sh" style="left:406px">10.1%</span><span class="b" style="left:441px">]</span><span class="cy" style="left:469px">Hostname: </span><span class="b" style="left:539px">Wild-Dog</span></div><div class="r" style="top:65px"><span class="cy" style="left:14px">Mem</span><span class="b" style="left:35px">[</span><span class="g" style="left:42px">|||||||||||||||||</span><span class="bb" style="left:161px">||</span><span class="y" style="left:175px">||||||||||||</span><span class="sh" style="left:364px">2.29G/7.77G</span><span class="b" style="left:441px">]</span><span class="cy" style="left:469px">Avg</span><span class="b" style="left:490px">[</span><span class="g" style="left:497px">||</span><span class="rd" style="left:511px">||||</span><span class="sh" style="left:868px">8.7%</span><span class="b" style="left:896px">]</span></div><div class="r" style="top:78px"><span class="cy" style="left:14px">Swp</span><span class="b" style="left:35px">[</span><span class="sh" style="left:385px">0K/7.63G</span><span class="b" style="left:441px">]</span></div><div class="r" style="top:104px"><i class="hdr" style="left:0px;width:945px"></i><i class="sel" style="left:343px;width:35px"></i><span class="k" style="left:14px">PID</span><span class="k" style="left:42px">USER</span><span class="k" style="left:112px">PRI</span><span class="k" style="left:147px">NI</span><span class="k" style="left:175px">VIRT</span><span class="k" style="left:224px">RES</span><span class="k" style="left:266px">SHR</span><span class="k" style="left:294px">S</span><span class="k" style="left:308px">CPU%</span><span class="k" style="left:343px">MEM%</span><span class="k" style="left:392px">TIME+</span><span class="k" style="left:441px">Command</span></div><div class="r" style="top:117px"><i class="sel" style="left:0px;width:945px"></i><span class="k" style="left:7px">2853</span><span class="k" style="left:42px">rob</span><span class="k" style="left:119px">20</span><span class="k" style="left:154px">0</span><span class="k" style="left:168px">1542M</span><span class="k" style="left:217px">566M</span><span class="k" style="left:259px">119M</span><span class="k" style="left:294px">S</span><span class="k" style="left:315px">0.0</span><span class="k" style="left:350px">7.1</span><span class="k" style="left:385px">3:15.23</span><span class="k" style="left:441px">/opt/vivaldi/vivaldi-bin --type=renderer --enable-blink-features=ResizeO</span></div><div class="r" style="top:130px"><span style="left:7px">2584</span><span style="left:42px">rob</span><span style="left:119px">20</span><span style="left:154px">0</span><span class="cy" style="left:168px">1267M</span><span class="cy" style="left:217px">282M</span><span class="cy" style="left:259px">150M</span><span style="left:294px">S</span><span style="left:315px">0.7</span><span style="left:350px">3.5</span><span style="left:385px">6:10.59</span><span style="left:441px">/opt/vivaldi/vivaldi-bin</span></div><div class="r" style="top:143px"><span style="left:7px">2990</span><span style="left:42px">rob</span><span style="left:119px">20</span><span style="left:154px">0</span><span class="cy" style="left:168px">1006M</span><span class="cy" style="left:217px">258M</span><span class="cy" style="left:259px">176M</span><span style="left:294px">S</span><span style="left:315px">0.0</span><span style="left:350px">3.2</span><span style="left:385px">7:01.05</span><span style="left:441px">/opt/vivaldi/vivaldi-bin --type=renderer --enable-blink-features=ResizeO</span></div><div class="r" style="top:156px"><span style="left:7px">2677</span><span style="left:42px">rob</span><span style="left:119px">20</span><span style="left:154px">0</span><span class="cy" style="left:175px">814M</span><span class="cy" style="left:217px">229M</span><span class="cy" style="left:259px">111M</span><span style="left:294px">S</span><span style="left:315px">0.0</span><span style="left:350px">2.9</span><span style="left:385px">7:33.36</span><span style="left:441px">/opt/vivaldi/vivaldi-bin --type=gpu-process --window-depth=24 --x11-visu</span></div><div class="r" style="top:169px"><span style="left:7px">1081</span><span style="left:42px">rob</span><span style="left:119px">20</span><span style="left:154px">0</span><span class="cy" style="left:168px">1252M</span><span class="cy" style="left:217px">215M</span><span class="cy" style="left:252px">64</span><span style="left:266px">500</span><span style="left:294px">S</span><span style="left:315px">0.7</span><span style="left:350px">2.7</span><span style="left:385px">2:52.17</span><span style="left:441px">/usr/share/atom-beta/atom --type=renderer --no-sandbox --primordial-pipe</span></div><div class="r" style="top:182px"><span style="left:14px">624</span><span style="left:42px">rob</span><span style="left:119px">20</span><span style="left:154px">0</span><span class="cy" style="left:168px">2847M</span><span class="cy" style="left:217px">192M</span><span class="cy" style="left:252px">45</span><span style="left:266px">432</span><span style="left:294px">S</span><span style="left:315px">0.0</span><span style="left:350px">2.4</span><span style="left:385px">0:29.17</span><span style="left:441px">dropbox start -i</span></div><div class="r" style="top:195px"><span style="left:7px">5042</span><span style="left:42px">rob</span><span style="left:119px">20</span><span style="left:154px">0</span><span class="cy" style="left:175px">650M</span><span class="cy" style="left:217px">161M</span><span class="cy" style="left:252px">42</span><span style="left:266px">852</span><span style="left:294px">S</span><span style="left:315px">0.0</span><span style="left:350px">2.0</span><span style="left:385px">0:12.13</span><span style="left:441px">/usr/bin/python -O /usr/bin/gramps</span></div><div class="r" style="top:208px"><span style="left:7px">2975</span><span style="left:42px">rob</span><span style="left:119px">20</span><span style="left:154px">0</span><span class="cy" style="left:175px">902M</span><span class="cy" style="left:217px">128M</span><span class="cy" style="left:252px">65</span><span style="left:266px">148</span><span style="left:294px">S</span><span style="left:315px">0.7</span><span style="left:350px">1.6</span><span style="left:385px">0:35.51</span><span style="left:441px">/opt/vivaldi/vivaldi-bin --type=renderer --enable-blink-features=ResizeO</span></div><div class="r" style="top:221px"><span style="left:7px">1043</span><span style="left:42px">rob</span><span style="left:119px">20</span><span style="left:154px">0</span><span class="cy" style="left:168px">1305M</span><span class="cy" style="left:217px">125M</span><span class="cy" style="left:252px">69</span><span style="left:266px">720</span><span style="left:294px">S</span><span style="left:315px">0.0</span><span style="left:350px">1.6</span><span style="left:385px">0:44.10</span><span style="left:441px">/bin/bash /usr/bin/atom-beta</span></div><div class="r" style="top:234px"><span style="left:7px">2980</span><span style="left:42px">rob</span><span style="left:119px">20</span><span style="left:154px">0</span><span class="cy" style="left:175px">873M</span><span class="cy" style="left:217px">112M</span><span class="cy" style="left:252px">65</span><span style="left:266px">156</span><span style="left:294px">S</span><span style="left:315px">0.0</span><span style="left:350px">1.4</span><span style="left:385px">0:18.26</span><span style="left:441px">/opt/vivaldi/vivaldi-bin --type=renderer --enable-blink-features=ResizeO</span></div><div class="r" style="top:247px"><span style="left:7px">1062</span><span style="left:42px">rob</span><span style="left:119px">20</span><span style="left:154px">0</span><span class="cy" style="left:175px">504M</span><span class="cy" style="left:217px">111M</span><span class="cy" style="left:252px">72</span><span style="left:266px">052</span><span style="left:294px">S</span><span style="left:315px">0.0</span><span style="left:350px">1.4</span><span style="left:385px">0:21.94</span><span style="left:441px">/usr/share/atom-beta/atom --type=gpu-process --channel=1043.0.774792664</span></div><div class="r" style="top:260px"><span style="left:14px">593</span><span style="left:42px">rob</span><span style="left:119px">20</span><span style="left:154px">0</span><span class="cy" style="left:175px">505M</span><span class="cy" style="left:210px">75</span><span style="left:224px">792</span><span class="cy" style="left:252px">24</span><span style="left:266px">176</span><span style="left:294px">S</span><span style="left:315px">4.7</span><span style="left:350px">0.9</span><span style="left:385px">0:38.73</span><span style="left:441px">awesome</span></div><div class="r" style="top:273px"><span style="left:7px">2984</span><span style="left:42px">rob</span><span style="left:119px">20</span><span style="left:154px">0</span><span class="cy" style="left:175px">772M</span><span class="cy" style="left:210px">70</span><span style="left:224px">820</span><span class="cy" style="left:252px">51</span><span style="left:266px">368</span><span style="left:294px">S</span><span style="left:315px">0.0</span><span style="left:350px">0.9</span><span style="left:385px">0:00.92</span><span style="left:441px">/opt/vivaldi/vivaldi-bin --type=renderer --enable-blink-features=ResizeO</span></div><div class="r" style="top:286px"><span style="left:14px">385</span><span class="sh" style="left:42px">root</span><span style="left:119px">20</span><span style="left:154px">0</span><span class="cy" style="left:175px">230M</span><span class="cy" style="left:210px">58</span><span style="left:224px">744</span><span class="cy" style="left:252px">41</span><span style="left:266px">128</span><span style="left:294px">S</span><span style="left:308px">14.6</span><span style="left:350px">0.7</span><span style="left:385px">8:32.58</span><span style="left:441px">/usr/lib/xorg-server/Xorg :0 -seat seat0 -auth /run/lightdm/root/:0 -nol</span></div><div class="r" style="top:299px"><span style="left:14px">173</span><span class="sh" style="left:42px">root</span><span style="left:119px">20</span><span style="left:154px">0</span><span class="cy" style="left:175px">183M</span><span class="cy" style="left:210px">50</span><span style="left:224px">624</span><span class="cy" style="left:252px">50</span><span style="left:266px">000</span><span style="left:294px">S</span><span style="left:315px">0.0</span><span style="left:350px">0.6</span><span style="left:385px">0:00.22</span><span style="left:441px">/usr/lib/systemd/systemd-journald</span></div><div class="r" style="top:312px"><span style="left:7px">2594</span><span style="left:42px">rob</span><span style="left:119px">20</span><span style="left:154px">0</span><span class="cy" style="left:175px">388M</span><span class="cy" style="left:210px">47</span><span style="left:224px">636</span><span class="cy" style="left:252px">38</span><span style="left:266px">952</span><span style="left:294px">S</span><span style="left:315px">0.0</span><span style="left:350px">0.6</span><span style="left:385px">0:00.15</span><span style="left:441px">/opt/vivaldi/vivaldi-bin --type=zygote</span></div><div class="r" style="top:325px"><span style="left:14px">907</span><span style="left:42px">rob</span><span style="left:119px">20</span><span style="left:154px">0</span><span class="cy" style="left:175px">519M</span><span class="cy" style="left:210px">45</span><span style="left:224px">824</span><span class="cy" style="left:252px">23</span><span style="left:266px">252</span><span style="left:294px">S</span><span style="left:315px">0.0</span><span style="left:350px">0.6</span><span style="left:385px">0:19.44</span><span style="left:441px">termite</span></div><div class="r" style="top:338px"><span style="left:7px">8509</span><span style="left:42px">rob</span><span style="left:119px">20</span><span style="left:154px">0</span><span class="cy" style="left:175px">510M</span><span class="cy" style="left:210px">45</span><span style="left:224px">420</span><span class="cy" style="left:252px">24</span><span style="left:266px">380</span><span style="left:294px">S</span><span style="left:315px">3.3</span><span style="left:350px">0.6</span><span style="left:385px">0:00.48</span><span style="left:441px">gnome-screenshot --interactive</span></div><div class="r" style="top:351px"><span style="left:14px">757</span><span style="left:42px">rob</span><span style="left:119px">20</span><span style="left:154px">0</span><span class="cy" style="left:175px">519M</span><span class="cy" style="left:210px">44</span><span style="left:224px">416</span><span class="cy" style="left:252px">23</span><span style="left:266px">184</span><span style="left:294px">S</span><span style="left:315px">0.7</span><span style="left:350px">0.5</span><span style="left:385px">0:01.24</span><span style="left:441px">termite</span></div><div class="r" style="top:364px"><span style="left:14px">981</span><span style="left:42px">rob</span><span style="left:119px">20</span><span style="left:154px">0</span><span class="cy" style="left:175px">454M</span><span class="cy" style="left:210px">43</span><span style="left:224px">340</span><span class="cy" style="left:252px">23</span><span style="left:266px">228</span><span style="left:294px">S</span><span style="left:315px">0.7</span><span style="left:350px">0.5</span><span style="left:385px">0:00.58</span><span style="left:441px">termite</span></div><div class="r" style="top:377px"><span style="left:14px">614</span><span style="left:42px">rob</span><span style="left:119px">20</span><span style="left:154px">0</span><span class="cy" style="left:175px">350M</span><span class="cy" style="left:210px">35</span><span style="left:224px">660</span><span class="cy" style="left:252px">13</span><span style="left:266px">916</span><span style="left:294px">S</span><span style="left:315px">0.0</span><span style="left:350px">0.4</span><span style="left:385px">0:00.32</span><span style="left:441px">/usr/lib64/polkit-gnome/polkit-gnome-authentication-agent-1</span></div><div class="r" style="top:390px"><span style="left:14px">616</span><span style="left:42px">rob</span><span style="left:119px">20</span><span style="left:154px">0</span><span class="cy" style="left:175px">145M</span><span class="cy" style="left:210px">35</span><span style="left:224px">108</span><span class="cy" style="left:252px">22</span><span style="left:266px">024</span><span style="left:294px">S</span><span style="left:315px">9.3</span><span style="left:350px">0.4</span><span style="left:385px">1:40.94</span><span style="left:441px">compton</span></div><div class="r" style="top:403px"><span style="left:7px">1045</span><span style="left:42px">rob</span><span style="left:119px">20</span><span style="left:154px">0</span><span class="cy" style="left:175px">323M</span><span class="cy" style="left:210px">32</span><span style="left:224px">064</span><span class="cy" style="left:252px">28</span><span style="left:266px">676</span><span style="left:294px">S</span><span style="left:315px">0.0</span><span style="left:350px">0.4</span><span style="left:385px">0:00.02</span><span style="left:441px">/usr/share/atom-beta/atom --type=zygote --no-sandbox</span></div><div class="r" style="top:416px"><span style="left:14px">618</span><span style="left:42px">rob</span><span style="left:119px">20</span><span style="left:154px">0</span><span class="cy" style="left:175px">315M</span><span class="cy" style="left:210px">23</span><span style="left:224px">304</span><span class="cy" style="left:252px">19</span><span style="left:266px">156</span><span style="left:294px">S</span><span style="left:315px">0.0</span><span style="left:350px">0.3</span><span style="left:385px">0:13.22</span><span style="left:441px">parcellite</span></div><div class="r" style="top:429px"><span style="left:7px">2840</span><span style="left:42px">rob</span><span style="left:119px">20</span><span style="left:154px">0</span><span class="cy" style="left:175px">393M</span><span class="cy" style="left:210px">20</span><span style="left:224px">092</span><span class="cy" style="left:259px">6</span><span style="left:266px">920</span><span style="left:294px">S</span><span style="left:315px">0.0</span><span style="left:350px">0.2</span><span style="left:385px">0:00.00</span><span style="left:441px">/opt/vivaldi/vivaldi-bin --type=gpu-broker</span></div><div class="r" style="top:442px"><span style="left:14px">391</span><span class="sh" style="left:42px">polkitd</span><span style="left:119px">20</span><span style="left:154px">0</span><span class="cy" style="left:175px">519M</span><span class="cy" style="left:210px">16</span><span style="left:224px">948</span><span class="cy" style="left:259px">9</span><span style="left:266px">344</span><span style="left:294px">S</span><span style="left:315px">0.0</span><span style="left:350px">0.2</span><span style="left:385px">0:00.51</span><span style="left:441px">/usr/lib/polkit-1/polkitd --no-debug</span></div><div class="r" style="top:455px"><span style="left:7px">4966</span><span style="left:42px">rob</span><span style="left:119px">20</span><span style="left:154px">0</span><span class="cy" style="left:175px">396M</span><span class="cy" style="left:210px">15</span><span style="left:224px">764</span><span class="cy" style="left:252px">13</span><span style="left:266px">892</span><span style="left:294px">S</span><span style="left:315px">0.0</span><span style="left:350px">0.2</span><span style="left:385px">0:00.03</span><span style="left:441px">/usr/lib/mate-settings-daemon/mate-settings-daemon</span></div><div class="r" style="top:468px"><span style="left:14px">360</span><span class="sh" style="left:42px">root</span><span style="left:119px">20</span><span style="left:154px">0</span><span class="cy" style="left:175px">430M</span><span class="cy" style="left:210px">14</span><span style="left:224px">692</span><span class="cy" style="left:252px">12</span><span style="left:266px">356</span><span style="left:294px">S</span><span style="left:315px">0.0</span><span style="left:350px">0.2</span><span style="left:385px">0:00.18</span><span style="left:441px">/usr/bin/NetworkManager --no-daemon</span></div><div class="r" style="top:481px"><i class="sel" style="left:14px;width:42px"></i><i class="sel" style="left:70px;width:42px"></i><i class="sel" style="left:126px;width:42px"></i><i class="sel" style="left:182px;width:42px"></i><i class="sel" style="left:238px;width:42px"></i><i class="sel" style="left:294px;width:42px"></i><i class="sel" style="left:350px;width:42px"></i><i class="sel" style="left:406px;width:42px"></i><i class="sel" style="left:462px;width:42px"></i><i class="sel" style="left:525px;width:420px"></i><span style="left:0px">F1</span><span class="k" style="left:14px">Help</span><span style="left:56px">F2</span><span class="k" style="left:70px">Setup</span><span style="left:112px">F3</span><span class="k" style="left:126px">Search</span><span style="left:168px">F4</span><span class="k" style="left:182px">Filter</span><span style="left:224px">F5</span><span class="k" style="left:238px">Tree</span><span style="left:280px">F6</span><span class="k" style="left:294px">SortBy</span><span style="left:336px">F7</span><span class="k" style="left:350px">Nice -</span><span style="left:392px">F8</span><span class="k" style="left:406px">Nice +</span><span style="left:448px">F9</span><span class="k" style="left:462px">Kill</span><span style="left:504px">F10</span><span class="k" style="left:525px">Quit</span></div></div>
</div>
</body></html>
